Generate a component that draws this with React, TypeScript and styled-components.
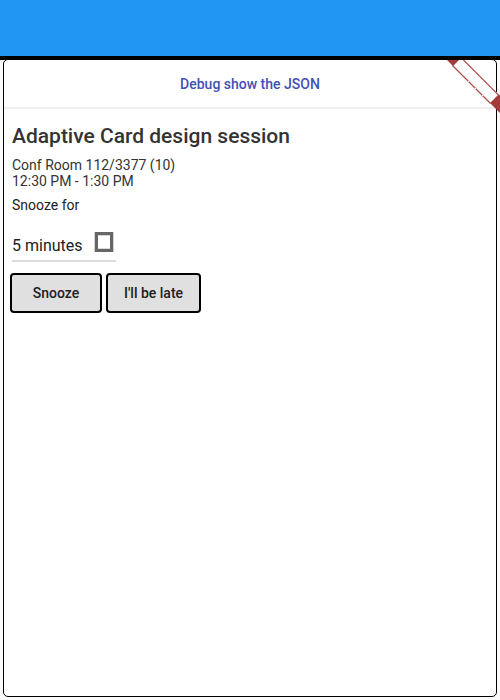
import React from "react";
import styled, { createGlobalStyle } from "styled-components";

const GlobalStyle = createGlobalStyle`
  *, *::before, *::after { box-sizing: border-box; }
  body {
    margin: 0;
    background: #fafafa;
    color: #333;
    font-family: Roboto, "Liberation Sans", sans-serif;
  }
`;

const Page = styled.div`
  position: relative;
  display: flex;
  flex-direction: column;
  min-height: 100vh;
`;

const AppBar = styled.header`
  height: 60px;
  flex: none;
  background: #2196f3;
  border-bottom: 4px solid #000;
`;

const Card = styled.main`
  flex: 1;
  margin: -1px 3px 3px;
  background: #fff;
  border: 1px solid #000;
  border-radius: 5px;
`;

const DebugBar = styled.div`
  display: flex;
  justify-content: center;
  border-bottom: 2px solid #eee;
`;

const DebugButton = styled.button`
  height: 47px;
  padding: 0 16px;
  border: 0;
  background: none;
  color: #3f51b5;
  font: 500 14px/20px Roboto, "Liberation Sans", sans-serif;
`;

const Content = styled.section`
  display: flex;
  flex-direction: column;
  align-items: flex-start;
  padding: 14px 8px 8px;
`;

const Title = styled.h1`
  margin: 0;
  font-size: 21px;
  font-weight: 500;
  line-height: 26px;
`;

const Details = styled.p`
  margin: 8px 0 0;
  font-size: 14px;
  line-height: 16px;
`;

const FieldLabel = styled.label`
  margin-top: 8px;
  font-size: 14px;
  line-height: 16px;
  color: #212121;
`;

const SelectField = styled.div`
  display: grid;
  grid-template-columns: auto 24px;
  align-items: center;
  width: 104px;
  height: 34px;
  margin-top: 15px;
  border-bottom: 2px solid #dcdcdc;
`;

const Select = styled.select`
  grid-area: 1 / 1 / 2 / 3;
  width: 100%;
  height: 32px;
  padding: 4px 0 0;
  border: 0;
  background: none;
  appearance: none;
  color: #212121;
  font: 400 16px/20px Roboto, "Liberation Sans", sans-serif;
`;

const SelectIcon = styled.svg`
  grid-area: 1 / 2;
  width: 24px;
  height: 28px;
  align-self: start;
  pointer-events: none;
`;

const Actions = styled.div`
  display: flex;
  gap: 4px;
  margin: 11px 0 0 -2px;
`;

const ActionButton = styled.button`
  min-width: 92px;
  height: 40px;
  padding: 0 16px;
  border: 2px solid #000;
  border-radius: 4px;
  background: #e0e0e0;
  color: #212121;
  font: 500 14px/20px Roboto, "Liberation Sans", sans-serif;
`;

const Ribbon = styled.svg`
  position: absolute;
  top: 60px;
  right: 0;
  width: 56px;
  height: 56px;
  pointer-events: none;
`;

export default function App() {
  return (
    <>
      <GlobalStyle />
      <Page>
        <AppBar />
        <Card>
          <DebugBar>
            <DebugButton type="button">Debug show the JSON</DebugButton>
          </DebugBar>
          <Content>
            <Title>Adaptive Card design session</Title>
            <Details>
              Conf Room 112/3377 (10)
              <br />
              12:30 PM - 1:30 PM
            </Details>
            <FieldLabel htmlFor="snooze">Snooze for</FieldLabel>
            <SelectField>
              <Select id="snooze" defaultValue="5">
                <option value="5">5 minutes</option>
                <option value="10">10 minutes</option>
                <option value="15">15 minutes</option>
              </Select>
              <SelectIcon viewBox="0 0 24 28" aria-hidden="true">
                <path d="M2.7 4H21.3V24H2.7ZM6 7.2V20.8H18V7.2Z" fill="#666" fillRule="evenodd" />
              </SelectIcon>
            </SelectField>
            <Actions>
              <ActionButton type="button">Snooze</ActionButton>
              <ActionButton type="button">I'll be late</ActionButton>
            </Actions>
          </Content>
        </Card>
        <Ribbon viewBox="0 0 56 56" aria-hidden="true">
          <path d="M3.5 0H20L56 35.5V52Z" fill="#fff" />
          <path d="M19.5 0L56 36.5M8.5 5.5L46.5 43.5" fill="none" stroke="#b04c4c" strokeWidth="1.2" />
          <path d="M27 19L22 24M34 26L29 31M41 33L36 38" fill="none" stroke="#fbf3f3" strokeWidth="1" />
          <path d="M3 0H15L9 6ZM46 43L54.5 34.5L56 36V53Z" fill="#a43c3c" />
        </Ribbon>
      </Page>
    </>
  );
}
